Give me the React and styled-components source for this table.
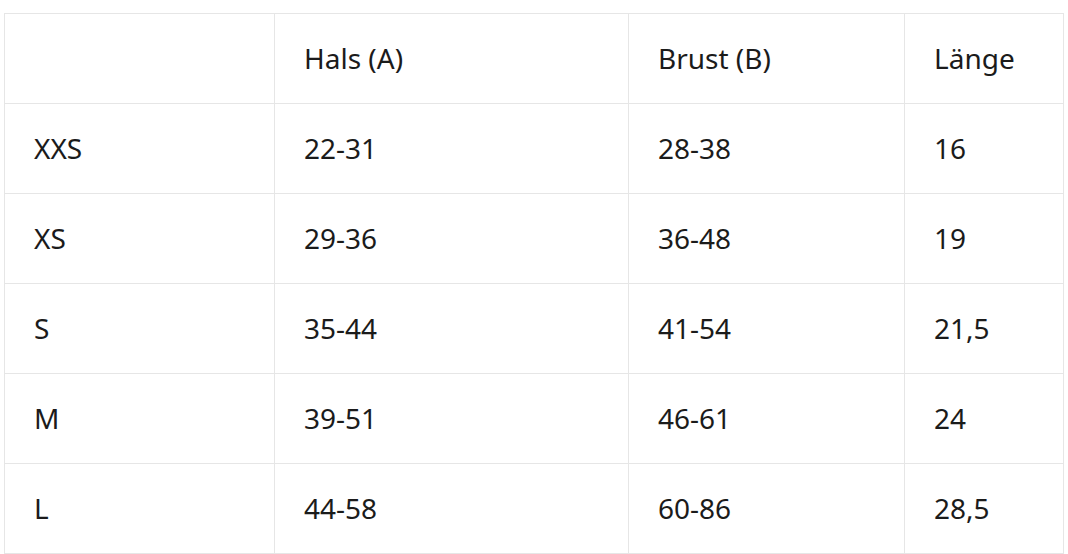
import React from 'react';
import styled, { createGlobalStyle } from 'styled-components';

const GlobalStyle = createGlobalStyle`
  html, body {
    margin: 0;
    padding: 0;
    background: #ffffff;
  }
  body {
    font-family: "Noto Sans", "Open Sans", sans-serif;
    color: #1b1b1b;
  }
`;

const sizes = [
  ['XXS', '22-31', '28-38', '16'],
  ['XS', '29-36', '36-48', '19'],
  ['S', '35-44', '41-54', '21,5'],
  ['M', '39-51', '46-61', '24'],
  ['L', '44-58', '60-86', '28,5'],
];

const colWidths = [270, 354, 276, 159];

function App() {
  return (
    <Page>
      <GlobalStyle />
      <SizeTable>
        <colgroup>
          {colWidths.map((w, i) => (
            <col key={i} style={{ width: w }} />
          ))}
        </colgroup>
        <thead>
          <Row>
            <HeadCell />
            <HeadCell>Hals (A)</HeadCell>
            <HeadCell>Brust (B)</HeadCell>
            <HeadCell>Länge</HeadCell>
          </Row>
        </thead>
        <tbody>
          {sizes.map((row) => (
            <Row key={row[0]}>
              {row.map((value, i) => (
                <Cell key={i}>{value}</Cell>
              ))}
            </Row>
          ))}
        </tbody>
      </SizeTable>
    </Page>
  );
}

export default App;

const Page = styled.div`
  padding: 13px 5px 0 4px;
`;

const SizeTable = styled.table`
  width: 1059px;
  table-layout: fixed;
  border-collapse: collapse;
  font-size: 28px;
  line-height: 1.2;
`;

const Row = styled.tr`
  height: 90px;
`;

const Cell = styled.td`
  border: 1px solid #e6e6e6;
  padding: 0 0 0 29px;
  text-align: left;
  vertical-align: middle;
  font-weight: 400;
`;

const HeadCell = styled(Cell).attrs({ as: 'th' })``;
